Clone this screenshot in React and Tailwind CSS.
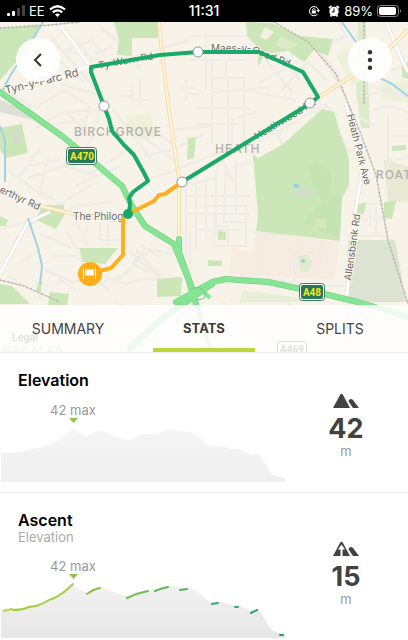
import React from "react";

const minorStreets = [
  "M44 45L100 60M52 38L96 90M66 50L92 40L106 58M60 62L84 82M76 38L92 62M100 26L126 50M118 36L140 70M96 54L112 46M118 62L150 52L190 40",
  "M128 22L118 40L100 30M190 36H280M206 32V90M250 28L262 60M270 70L298 50M258 84L300 60M242 90L296 100M266 60L292 92M278 54L300 80M282 90L308 62L326 80",
  "M0 90L36 108L64 90L86 104M24 100L40 122M60 84L104 96M36 128L64 112L100 110M132 82V100H150M132 96H120M140 78V106M186 80V102M178 88H196M186 94H200",
  "M190 60H246M212 60V144M226 60V80M220 60H232M212 78H246M212 92L270 88M228 80V150M244 80V146M196 108H250M196 124H244M172 130L212 126",
  "M66 112L92 138M54 124L86 120M40 148L20 176M28 166L60 160M28 178L64 166L100 176M8 170L48 200M48 158L40 190L62 206M64 160L84 128L90 106M70 170L92 140L100 108",
  "M88 176L126 150M76 186L120 166M140 134L174 160M150 128L178 148M112 108L152 160M154 178L180 168L216 154M166 190L216 178M144 156L172 150L204 134",
  "M186 176V260M196 178V246M206 176V240M216 170V236M226 166L224 214M236 160V214M186 196H250M184 214H250M196 230H240M232 150L256 142M234 166L252 162",
  "M52 222L76 206L112 202M60 204L96 182M68 232L82 262M76 222L88 246M88 220L84 242M100 222V240H130M108 224V246M50 256H84M40 234L72 248M46 270L72 282L96 278L110 292",
  "M102 276L126 284L148 278L170 284L184 280M114 284L150 250L180 254M136 250L160 276M140 244L158 256L180 246M146 248L132 264M154 236L184 248M118 282L118 276M132 264L148 272",
  "M12 244L36 218M4 228L34 220M20 262L40 250M56 286L60 280L76 290M8 276L22 284M40 286V300M102 286L108 278M130 252L166 284M190 230V274M196 224V250",
  "M204 206H246V246H214V214M214 226H228V246M206 238H216M224 206V222H246M252 232L268 237M262 230L258 278M298 240L294 282M322 240L316 286M262 234H334M240 276L262 278L320 286H346",
  "M258 142L322 106M282 130L278 138M270 120L282 144M236 118L256 112M330 110L348 152M348 152L360 148M324 104L338 116M360 118L376 126M366 96L392 88M372 110L392 106L408 112M388 116V170M392 136H408M390 160L408 158M360 204H384M362 220L388 218M370 206V226M376 204V236M348 236H384",
  "M338 22L346 36L330 44M352 26L364 58L400 44M380 50V70M380 72L406 66M370 86L408 96M350 106L360 160M306 36L340 76M320 54L344 92M232 118V144L214 156M220 154L232 182M254 150L262 238",
  "M0 318L28 308L54 320M14 326L60 316M48 302L80 324M62 300L84 316L110 308M116 302L144 320M224 302L240 336L268 326M288 302L310 340M350 302L344 350",
];

const parks = [
  "M0 28L40 24L34 40L20 58L0 80Z",
  "M114 22H158V38L132 38L132 56L117 55L119 40Z",
  "M246 22L272 23L300 36L333 39L328 56L314 50L304 62L288 51L265 54L258 67V48L247 36Z",
  "M0 128L22 124L28 153L6 158L0 150Z",
  "M188 138L196 137L194 158L187 160Z",
  "M258 158L282 145L322 109L334 112L341 136L349 158V185L340 202V241L256 231L258 215L253 155Z",
  "M36 220L42 205H64V216L56 229L45 224Z",
  "M79 248H118L105 264L83 262Z",
  "M157 279L182 277L181 296L157 297Z",
  "M0 284L12 286L30 304H0Z",
  "M50 292L69 294L67 305H48Z",
  "M0 216L8 220L6 226H0Z",
  "M218 231L226 232L226 240L218 240Z",
  "M208 260L222 261V266H208Z",
  "M392 146L406 145V150L392 151Z",
  "M358 205L366 202L364 214H357Z",
  "M384 202L396 201L392 219L384 218Z",
  "M402 67L408 62V79L402 77Z",
  "M38 283L42 282L41 292L36 291Z",
];

const whiteRoads =
  "M58 22L90 66M50 82L90 66M0 274L28 222L50 212M346 104L362 172L356 208L346 304M386 22L402 60L408 72M145 184L160 202";
const railways =
  "M0 28L40 26L80 22M0 280L24 286L60 302M274 22L308 42L336 74L360 132L376 175L388 240L408 304M364 22V104";
const yellowRoads =
  "M159 22L162 54L170 118L179 178V235M314 100L352 76L384 54L408 30M36 205L74 214L128 222";
const trunkRoads =
  "M0 92L62 136L96 164L122 186L132 206L145 226L174 244L188 278L196 304M179 239V252L194 294M176 302L212 282L226 279L268 282L320 293L358 302L408 317M130 348L160 320L212 284";

function CityMap() {
  return (
    <svg className="block w-full" viewBox="0 22 408 331" role="img" aria-label="Route map" fontFamily="Inter, Roboto, sans-serif">
      <rect x="0" y="22" width="408" height="331" fill="#f8f3e9" />
      <path d="M257 231L340 242L334 280L229 274L232 248L253 252Z" fill="#f7ece1" />
      <path d="M348 240H395L406 302H346Z" fill="#dce3d2" />
      <path d="M384 160L408 166V202H388Z" fill="#e9e9d4" />
      <path d="M358 22H366L370 128H361L356 92Z" fill="#dcecca" />
      <path d="M242 290L330 302H240Z" fill="#e7efd6" />
      <path d="M126 116L150 113L156 138L140 140L128 130Z" fill="#eef0d8" />
      <path d="M380 84L408 80V102L382 100Z" fill="#edf1da" />
      <path d="M336 54L350 48L364 78L352 86Z" fill="#eef1d9" />
      <path d="M0 100L20 108L32 120L0 112Z" fill="#dce0d5" />

      <g fill="none" strokeLinejoin="round">
        {minorStreets.map((d) => (
          <g key={d}>
            <path d={d} stroke="#e9e5e0" strokeWidth="2" />
            <path d={d} stroke="#f5f2ed" strokeWidth="1" />
          </g>
        ))}
      </g>

      {parks.map((d) => <path key={d} d={d} fill="#cbe7b8" />)}
      <path d="M308 168L316 162L324 166L332 176L330 192L342 196L340 238L304 222L322 202L312 182Z" fill="#c5e3b3" />
      <path d="M12 130L20 128L22 142L14 144Z" fill="#d3dcca" />
      <path d="M265 27L274 32L266 40L260 37Z" fill="#f4f1e2" />
      <path d="M280 37L298 44L290 50L276 46Z" fill="#dcebc6" />
      <path d="M316 218L326 219V228L314 227Z" fill="#d5e6b7" />
      <path d="M296 190H311V196H296Z" fill="#d4dccf" />
      <path d="M293 184L298 184L300 188L295 188Z" fill="#92d4df" />
      <path d="M298 256L308 255L312 262L308 272L300 271Z" fill="#e1ebcf" />
      <circle cx="303" cy="261" r="2" fill="#92d4df" />

      <g fill="none" strokeLinejoin="round">
        <path d={whiteRoads} stroke="#ddd8d0" strokeWidth="4" />
        <path d={whiteRoads} stroke="#ffffff" strokeWidth="3" />
        <path d="M43 22L24 54L10 76L3 90M0 126L5 140V182M28 218L38 248L42 266L40 284M342 22L356 42M376 76L392 84L408 96" stroke="#9fd3e4" strokeWidth="2" />
        <path d={railways} stroke="#c4c2bc" strokeWidth="1" />
        <path d={railways} stroke="#b5b3ac" strokeWidth="2" strokeDasharray="1 3" />
        <path d={yellowRoads} stroke="#f7dcae" strokeWidth="4" />
        <path d={yellowRoads} stroke="#fff5d8" strokeWidth="2" />
        <path d={trunkRoads} stroke="#75c87d" strokeWidth="6" strokeLinecap="round" />
        <path d={trunkRoads} stroke="#84e594" strokeWidth="5" strokeLinecap="round" />
        <path d="M188 296L200 288L210 298M196 302L210 350" stroke="#84e594" strokeWidth="4" />
        <path d="M190 290Q200 284 204 292T196 300" stroke="#75c87d" strokeWidth="1" />
      </g>

      <path id="coed-road" d="M211 52L250 52L294 69" fill="none" />
      <g fill="#6d6b68" stroke="#faf7f0" strokeWidth="2" paintOrder="stroke" fontSize="10">
        <text transform="translate(6 94) rotate(-14)" fontSize="11">Tyn-y-Parc Rd</text>
        <text transform="translate(99 69) rotate(-10)">Ty-Wern Rd</text>
        <text><textPath href="#coed-road">Maes-y-Coed Rd</textPath></text>
        <text transform="translate(-1 192) rotate(25)">erthyr Rd</text>
        <text transform="translate(347 115) rotate(76)">Heath Park Ave</text>
        <text transform="translate(351 281) rotate(-82)">Allensbank Rd</text>
        <text transform="translate(257 140) rotate(-31)">Heathwood Rd</text>
        <text x="73" y="220">The Philog</text>
      </g>
      <g fill="#b3b0ab" fontSize="12" fontWeight="500" letterSpacing="1">
        <text x="74" y="136">BIRCHGROVE</text>
        <text x="215" y="153">HEATH</text>
        <text x="376" y="179">ROAT</text>
        <text x="2" y="355">GABALFA</text>
      </g>
      <text x="12" y="341" fontSize="10" fontWeight="600" fill="#222222">Legal</text>

      <g fill="none" strokeLinecap="round" strokeLinejoin="round" strokeWidth="4">
        <path d="M129 214L130 204L129 198L133 192L148 181L144 173L134 155L124 145L112 131L109 119L104 106L91 72V67L160 55L198 52H259L303 72L318 97L311 103L182 182" stroke="#19a968" />
        <path d="M182 182L165 194L159 195L154 201L128 214L123 219V255L111 268L92 273" stroke="#fdb022" />
      </g>
      <g fill="#ffffff" stroke="#979797" strokeWidth="1">
        <circle cx="198" cy="52" r="5" /><circle cx="104" cy="106" r="5" />
        <circle cx="310" cy="103" r="5" /><circle cx="182" cy="182" r="5" />
      </g>
      <circle cx="128" cy="214" r="5" fill="#16a765" />
      <circle cx="90" cy="274" r="12" fill="#fdad19" />
      <path d="M83.500 268V279M95.500 268V279" stroke="#ffffff" strokeWidth="1" />
      <rect x="85" y="269.500" width="9" height="6" fill="#ffffff" />

      <g fontFamily="Roboto, sans-serif" fontSize="10" fontWeight="700" textAnchor="middle">
        <rect x="66.500" y="147.500" width="30" height="17" rx="3" fill="#ffffff" stroke="#417b61" />
        <rect x="68" y="149" width="27" height="14" rx="2" fill="#287957" />
        <text x="82" y="160" fill="#f5ea10">A470</text>
        <rect x="299.500" y="283.500" width="25" height="17" rx="3" fill="#ffffff" stroke="#417b61" />
        <rect x="301" y="285" width="22" height="14" rx="2" fill="#287957" />
        <text x="312" y="296" fill="#f5ea10">A48</text>
        <rect x="277.500" y="341.500" width="29" height="17" rx="3" fill="#ffffff" stroke="#222222" />
        <text x="292" y="353" fill="#222222">A469</text>
      </g>
    </svg>
  );
}

function StatusBar() {
  return (
    <div className="grid h-[22px] grid-cols-3 items-center bg-black px-1.5 text-[13px] leading-none text-white">
      <div className="flex items-center gap-1">
        <svg width="19" height="12" viewBox="0 0 19 12" aria-hidden="true">
          <rect x="1" y="8" width="3" height="3" rx="1" fill="#fff" />
          <rect x="6" y="6" width="3" height="5" rx="1" fill="#fff" />
          <rect x="11" y="3" width="3" height="8" rx="1" fill="#444" />
          <rect x="16" y="0" width="3" height="11" rx="1" fill="#444" />
        </svg>
        <span>EE</span>
        <svg width="17" height="12" viewBox="0 0 17 12" fill="none" stroke="#fff" strokeWidth="2.200" aria-hidden="true">
          <path d="M1 4.500Q8.500 -2 16 4.500M3.800 7.400Q8.500 3.200 13.200 7.400" />
          <path d="M6 9.500Q8.500 7.400 11 9.500L8.500 12Z" fill="#fff" stroke="none" />
        </svg>
      </div>
      <span className="text-center text-[14px] font-medium">11:31</span>
      <div className="flex items-center justify-end gap-1">
        <svg className="mr-1" width="12" height="12" viewBox="0 0 12 12" fill="none" stroke="#fff" aria-hidden="true">
          <path d="M9.500 9.200A4.600 4.600 0 1 1 10.500 5" /><path d="M8.500 5H12L10.300 7.500Z" fill="#fff" stroke="none" />
          <rect x="3.800" y="5.500" width="4" height="3" fill="#fff" stroke="none" /><path d="M4.500 5.500V4.500Q5.800 2.500 7.100 4.500V5.500" />
        </svg>
        <svg width="12" height="12" viewBox="0 0 12 12" aria-hidden="true">
          <circle cx="6" cy="6.500" r="4.700" fill="#fff" /><path d="M1 3L3.500 1M11 3L8.500 1M2.500 11.500L3.500 10M9.500 11.500L8.500 10" stroke="#fff" strokeWidth="1.800" />
          <path d="M6 3.500V7H3.800" fill="none" stroke="#000" />
        </svg>
        <span>89%</span>
        <svg width="25" height="12" viewBox="0 0 25 12" aria-hidden="true">
          <rect x=".500" y=".500" width="21" height="11" rx="3" fill="none" stroke="#888" />
          <rect x="2" y="2" width="17" height="8" rx="2" fill="#fff" /><path d="M23 4Q25 6 23 8Z" fill="#888" />
        </svg>
      </div>
    </div>
  );
}

const tabs = ["SUMMARY", "STATS", "SPLITS"];

function Tabs() {
  return (
    <nav className="absolute inset-x-0 bottom-0 grid h-12 grid-cols-3 border-b border-[#eeeeee] bg-white/85">
      {tabs.map((tab) => (
        <button
          key={tab}
          type="button"
          className={
            tab === "STATS"
              ? "mx-[17px] border-b-4 border-[#b9d63c] pt-1 text-[13px] font-bold text-[#3d3d3d]"
              : "mx-[17px] border-b-4 border-transparent pt-1 text-[14px] text-[#444444]"
          }
        >
          {tab}
        </button>
      ))}
    </nav>
  );
}

const ascents = [
  ["M4 31L12 29", "#b7d643"],
  ["M13 30Q23 30 29 27L36 26Q43 24 49 20Q60 17 73 4", "#a5cf3f"],
  ["M87 14Q94 9 100 8", "#88c34b"],
  ["M127 18Q137 13 148 11", "#75bd50"],
  ["M155 11Q162 8 168 7", "#66b955"],
  ["M180 10L187 9", "#54b35c"],
  ["M212 24L218 23", "#3eae65"],
  ["M235 27H238", "#35aa68"],
  ["M251 33L257 30", "#2da66b"],
  ["M280 55H283", "#229f70"],
];

function Profile({ id, top, bottom, showAscent }) {
  return (
    <svg className="block h-[58px] w-[285px]" viewBox="0 0 285 58" role="img" aria-label="Elevation profile">
      <defs>
        <linearGradient id={id} x1="0" y1="0" x2="0" y2="1">
          <stop stopColor={top} /><stop offset="1" stopColor={bottom} />
        </linearGradient>
      </defs>
      <path
        d="M1 29L22 28C30 26 34 24 40 24C50 20 56 18 65 11L73 4C78 8 82 11 87 13C92 9 95 6 102 7C109 9 114 14 127 16C133 16 138 10 147 10H156L168 5C176 8 187 7 191 8C200 12 204 19 210 22L222 22C228 24 234 26 240 25L250 31L258 29C265 37 269 50 276 52L285 54V58H1Z"
        fill={`url(#${id})`}
      />
      {showAscent && ascents.map(([d, color]) => (
        <path key={d} d={d} fill="none" stroke={color} strokeWidth="2" strokeLinecap="round" />
      ))}
    </svg>
  );
}

function PeakIcon({ ascent }) {
  return (
    <svg width="26" height="16" viewBox="0 0 26 16" fill="#424242" aria-hidden="true">
      <path d="M0 15L7 2Q8.500 -.500 10 2L17 15Z" />
      <path d="M16 7Q18 5 20 7L26 15H20L15.500 8.500Z" />
      {ascent && <path d="M8.500 3.500L12 8.500H9.500V15H7.500V8.500H5Z" fill="#fff" />}
    </svg>
  );
}

function StatCard({ title, subtitle, value, id, top, bottom, ascent }) {
  return (
    <section className="flex border-b border-[#e8e8e8]">
      <div className="min-w-0 flex-1 pt-[17px]">
        <div className="px-[18px]">
          <h2 className="text-[16px] leading-5 font-semibold text-black">{title}</h2>
          {subtitle && <p className="text-[13px] leading-[14px] text-[#aaaaaa]">{subtitle}</p>}
        </div>
        <div className={subtitle ? "w-[146px] pt-3.5" : "w-[146px] pt-3"}>
          <p className="text-center text-[13px] leading-4 text-[#999999]">42 max</p>
          <svg className="mx-auto block" width="9" height="6" viewBox="0 0 9 6" aria-hidden="true">
            <path d="M0 0H9L4.500 5Z" fill="#8bc34a" />
          </svg>
        </div>
        <Profile id={id} top={top} bottom={bottom} showAscent={ascent} />
        <div className="h-2.5" />
      </div>
      <div className={ascent ? "flex w-[124px] shrink-0 flex-col items-center pt-12" : "flex w-[124px] shrink-0 flex-col items-center pt-10"}>
        <PeakIcon ascent={ascent} />
        <strong className="mt-1.5 text-[27px] leading-7 font-bold text-[#414141]">{value}</strong>
        <span className="text-[13px] leading-4 text-[#999999]">m</span>
      </div>
    </section>
  );
}

export default function App() {
  return (
    <main className="h-screen overflow-hidden bg-white font-['Inter',Roboto,sans-serif]">
      <StatusBar />
      <div className="relative">
        <CityMap />
        <button type="button" aria-label="Back" className="absolute top-4 left-4 flex size-11 items-center justify-center rounded-full bg-white/90">
          <svg width="10" height="14" viewBox="0 0 10 14" fill="none" stroke="#333" strokeWidth="2" aria-hidden="true"><path d="M8 1L2 7L8 13" /></svg>
        </button>
        <button type="button" aria-label="More options" className="absolute top-4 right-4 flex size-11 items-center justify-center rounded-full bg-white/90">
          <svg width="6" height="20" viewBox="0 0 6 20" fill="#333" aria-hidden="true"><circle cx="3" cy="2.300" r="2.200" /><circle cx="3" cy="10" r="2.200" /><circle cx="3" cy="17.700" r="2.200" /></svg>
        </button>
        <Tabs />
      </div>
      <StatCard title="Elevation" value="42" id="elevation-fill" top="#f5f5f5" bottom="#efefef" />
      <StatCard title="Ascent" subtitle="Elevation" value="15" id="ascent-fill" top="#f1f1f1" bottom="#e7e7e7" ascent />
    </main>
  );
}
